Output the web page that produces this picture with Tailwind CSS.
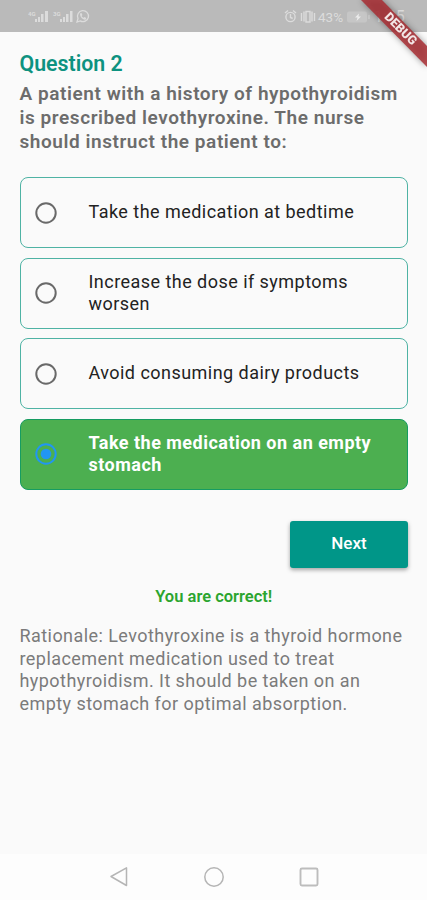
<!DOCTYPE html>
<html lang="en">
<head>
    <meta charset="UTF-8">
    <meta name="viewport" content="width=device-width, initial-scale=1.0">
    <title>Nursing Quiz</title>
    <script src="https://cdn.jsdelivr.net/npm/@tailwindcss/browser@4"></script>
</head>
<body class="bg-[#fafafa] font-[Roboto,sans-serif]">
    <div class="relative flex flex-col h-[900px] overflow-hidden">
        <!-- Status bar -->
        <header class="flex items-center justify-between h-8 shrink-0 bg-[#bababa] pl-7 pr-[24px] text-[#dcdcdc]">
            <svg class="w-[64px] h-8" viewBox="0 0 64 32" fill="currentColor">
                <text x="0" y="16" font-size="6" font-weight="700">4G</text>
                <path d="M7 22v-3h2v3zM10 22v-5h2v5zM13 22v-8h2.500v8zM17 22V11h3v11z" />
                <text x="25" y="16" font-size="6" font-weight="700">3G</text>
                <path d="M32 22v-3h2v3zM35 22v-5h2v5zM38 22v-8h2.500v8zM42 22V11h2.500v11z" />
                <path d="M49 22l1-3.500a5.500 5.500 0 1 1 2.200 2.400z" fill="none" stroke="currentColor" stroke-width="1.300" />
                <path d="M52 13.500l1.500-.5.900 2-.7 1c.5 1 1 1.400 1.800 1.800l1-.7 1.800.9-.6 1.500c-2.500 1-6-2.700-5.700-6z" />
            </svg>
            <div class="flex items-center h-8">
                <svg class="w-[34px] h-8" viewBox="0 0 34 32" fill="none" stroke="currentColor" stroke-width="1.400">
                    <circle cx="6.500" cy="17" r="4.600" />
                    <path d="M6.500 14v3.500l2.200 1M1 13l3-2.500M12 13l-3-2.500M17.500 13v8M20 11.500v10M30.500 13v8M28 11.500v10M22 11.500h4v10.500h-4z" />
                </svg>
                <span class="text-[13.500px] w-[28px] pt-0.5">43%</span>
                <svg class="w-[28px] h-8" viewBox="0 0 28 32">
                    <rect x="1" y="11.500" width="20" height="11" rx="2" fill="#c6c6c6" />
                    <path d="M22 15h2v4h-2z" fill="#c6c6c6" />
                    <path d="M13 13.500l-4 4h2.500l-1 3.500 4.500-4.500h-2.500z" fill="#ececec" />
                </svg>
                <span class="text-[16px] w-[29px] pt-0.5">1:05</span>
            </div>
        </header>

        <main class="flex flex-col flex-1 pl-[19.500px] pr-[19px] pt-[17.500px]">
            <h1 class="text-[21.300px] leading-7 font-semibold text-[#0d9280] whitespace-nowrap"><span>Question 2</span></h1>
            <p class="mt-1 text-[19px] leading-[24px] font-semibold tracking-[0.560px] text-[#6c6c6c] whitespace-nowrap"><span>A patient with a history of hypothyroidism</span><br><span>is prescribed levothyroxine. The nurse</span><br><span>should instruct the patient to:</span></p>

            <!-- Answers -->
            <div class="flex flex-col gap-[9.500px] mt-[23.500px] text-[18px] leading-[22.500px] tracking-[0.460px] text-[#222] whitespace-nowrap">
                <label class="flex items-center h-[71px] rounded-lg border border-[#4fb3a4] pl-[14px]">
                    <svg class="w-[22px] h-[22px] mr-8" viewBox="0 0 22 22"><circle cx="11" cy="11" r="9.700" fill="none" stroke="#696969" stroke-width="2" /></svg>
                    <span>Take the medication at bedtime</span>
                </label>
                <label class="flex items-center h-[71px] rounded-lg border border-[#4fb3a4] pl-[14px]">
                    <svg class="w-[22px] h-[22px] mr-8" viewBox="0 0 22 22"><circle cx="11" cy="11" r="9.700" fill="none" stroke="#696969" stroke-width="2" /></svg>
                    <span>Increase the dose if symptoms<br>worsen</span>
                </label>
                <label class="flex items-center h-[71px] rounded-lg border border-[#4fb3a4] pl-[14px]">
                    <svg class="w-[22px] h-[22px] mr-8" viewBox="0 0 22 22"><circle cx="11" cy="11" r="9.700" fill="none" stroke="#696969" stroke-width="2" /></svg>
                    <span>Avoid consuming dairy products</span>
                </label>
                <label class="flex items-center h-[71px] rounded-lg border border-[#169c62] bg-[#4caf50] pl-[14px] text-white font-bold tracking-[0.480px]">
                    <svg class="w-[22px] h-[22px] mr-8" viewBox="0 0 22 22"><circle cx="11" cy="11" r="9.700" fill="none" stroke="#2196f3" stroke-width="2" /><circle cx="11" cy="11" r="5.300" fill="#2196f3" /></svg>
                    <span>Take the medication on an empty<br>stomach</span>
                </label>
            </div>

            <button class="self-end mt-[31px] w-[118px] h-[47px] rounded-[3px] bg-[#009688] text-white text-[17px] font-medium shadow-[0_2px_4px_rgba(0,0,0,0.350)]">Next</button>

            <p class="mt-[18px] text-center text-[16.500px] leading-[22px] font-semibold text-[#2ba52f]"><span>You are correct!</span></p>
            <p class="mt-[17.500px] text-[18px] leading-[22.500px] tracking-[0.440px] text-[#7b7b7b] whitespace-nowrap"><span>Rationale: Levothyroxine is a thyroid hormone</span><br><span>replacement medication used to treat</span><br><span>hypothyroidism. It should be taken on an</span><br><span>empty stomach for optimal absorption.</span></p>
        </main>

        <!-- Navigation bar -->
        <nav class="flex items-center justify-center gap-[73px] h-[46px] shrink-0 bg-[#fdfdfd]">
            <svg class="w-[22px] h-[22px]" viewBox="0 0 22 22" fill="none" stroke="#b5b5b5" stroke-width="1.500" stroke-linejoin="round"><path d="M3 10.500L18.500 1.800v17.700z" /></svg>
            <svg class="w-[22px] h-[22px]" viewBox="0 0 22 22" fill="none" stroke="#b5b5b5" stroke-width="1.500"><circle cx="11" cy="11" r="9.200" /></svg>
            <svg class="w-[22px] h-[22px]" viewBox="0 0 22 22" fill="none" stroke="#bdbdbd" stroke-width="1.900"><rect x="2.500" y="2.500" width="17" height="17" rx="1.500" /></svg>
        </nav>

        <!-- Debug ribbon -->
        <svg class="absolute top-0 right-0 w-[80px] h-[80px] drop-shadow-[0_0_3px_rgba(0,0,0,0.450)]" viewBox="0 0 80 80">
            <path d="M14 0h21L80 46v21z" fill="#a82e34" fill-opacity="0.850" />
            <text x="54" y="33" transform="rotate(45 54 28.500)" text-anchor="middle" font-size="12.500" font-weight="900" fill="#f3e6e6">DEBUG</text>
        </svg>
    </div>
</body>
</html>
